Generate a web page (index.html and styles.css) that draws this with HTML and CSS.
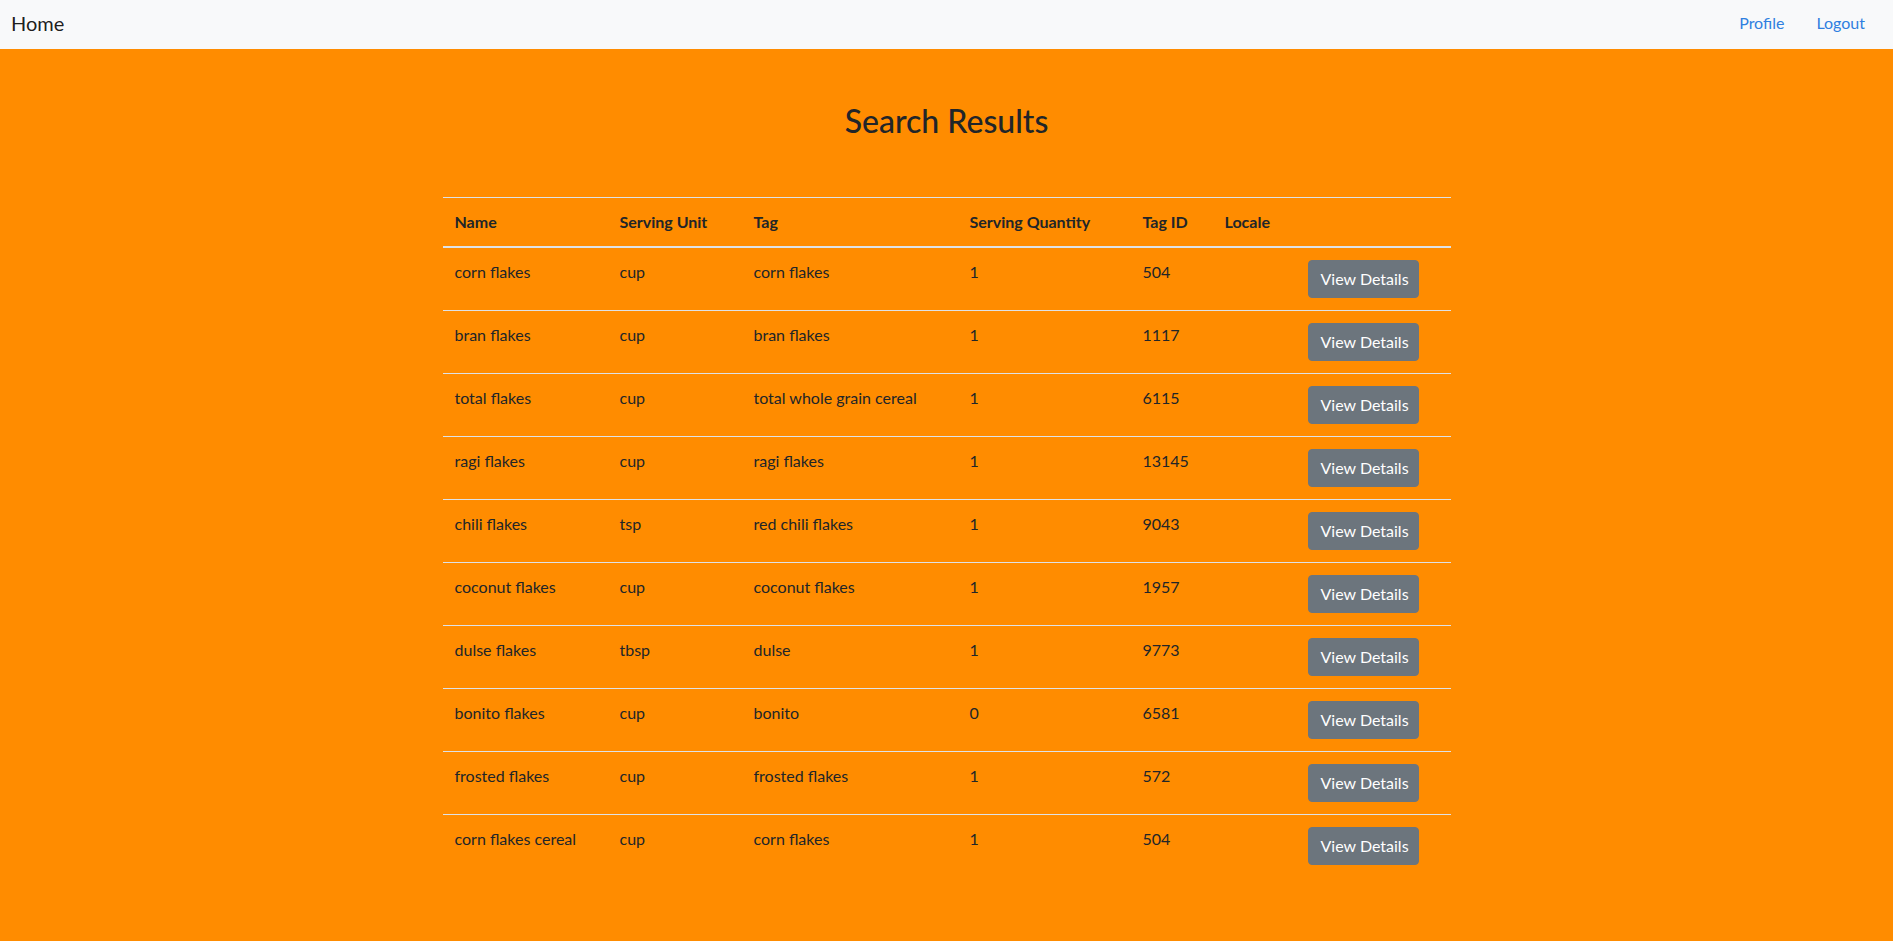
FILE: index.html
```html
<!DOCTYPE html>
<html lang="en">
<head>
<meta charset="utf-8">
<title>Search Results</title>
<link rel="stylesheet" href="styles.css">
</head>
<body>
<nav class="navbar">
  <a class="brand" href="#">Home</a>
  <div class="nav-links">
    <a class="nav-link" href="#">Profile</a>
    <a class="nav-link" href="#">Logout</a>
  </div>
</nav>
<main class="content">
  <h2 class="title">Search Results</h2>
  <table class="results">
    <colgroup>
      <col class="c-name"><col class="c-unit"><col class="c-tag"><col class="c-qty"><col class="c-tagid"><col class="c-locale"><col class="c-action">
    </colgroup>
    <thead>
      <tr><th>Name</th><th>Serving Unit</th><th>Tag</th><th>Serving Quantity</th><th>Tag ID</th><th>Locale</th><th></th></tr>
    </thead>
    <tbody>
      <tr><td>corn flakes</td><td>cup</td><td>corn flakes</td><td>1</td><td>504</td><td></td><td><button class="btn">View Details</button></td></tr>
      <tr><td>bran flakes</td><td>cup</td><td>bran flakes</td><td>1</td><td>1117</td><td></td><td><button class="btn">View Details</button></td></tr>
      <tr><td>total flakes</td><td>cup</td><td>total whole grain cereal</td><td>1</td><td>6115</td><td></td><td><button class="btn">View Details</button></td></tr>
      <tr><td>ragi flakes</td><td>cup</td><td>ragi flakes</td><td>1</td><td>13145</td><td></td><td><button class="btn">View Details</button></td></tr>
      <tr><td>chili flakes</td><td>tsp</td><td>red chili flakes</td><td>1</td><td>9043</td><td></td><td><button class="btn">View Details</button></td></tr>
      <tr><td>coconut flakes</td><td>cup</td><td>coconut flakes</td><td>1</td><td>1957</td><td></td><td><button class="btn">View Details</button></td></tr>
      <tr><td>dulse flakes</td><td>tbsp</td><td>dulse</td><td>1</td><td>9773</td><td></td><td><button class="btn">View Details</button></td></tr>
      <tr><td>bonito flakes</td><td>cup</td><td>bonito</td><td>0</td><td>6581</td><td></td><td><button class="btn">View Details</button></td></tr>
      <tr><td>frosted flakes</td><td>cup</td><td>frosted flakes</td><td>1</td><td>572</td><td></td><td><button class="btn">View Details</button></td></tr>
      <tr><td>corn flakes cereal</td><td>cup</td><td>corn flakes</td><td>1</td><td>504</td><td></td><td><button class="btn">View Details</button></td></tr>
    </tbody>
  </table>
</main>
</body>
</html>
```
FILE: styles.css
```css
* { box-sizing: border-box; }
html, body {
  margin: 0;
  padding: 0;
  background: #ff8c00;
  min-height: 100vh;
}
body {
  font-family: Lato, "Open Sans", "Noto Sans", sans-serif;
  font-size: 16px;
  line-height: 1.5;
  color: #212529;
}
.navbar {
  height: 49px;
  background: #f8f9fa;
  display: flex;
  align-items: center;
  justify-content: space-between;
  padding: 0 12px 0 11px;
}
.brand {
  font-size: 20px;
  color: rgba(0, 0, 0, 0.9);
  text-decoration: none;
  line-height: 30px;
  margin-top: -3px;
}
.nav-links {
  display: flex;
  margin-top: -3px;
}
.nav-link {
  color: #2f7fe0;
  text-decoration: none;
  padding: 0 16px;
  line-height: 24px;
}
.content {
  padding: 53px 0 40px;
}
.title {
  margin: 0 0 57px;
  text-align: center;
  font-size: 32px;
  font-weight: 500;
  line-height: 1.2;
}
.results {
  width: 1008px;
  margin: 0 auto;
  border-collapse: collapse;
  table-layout: fixed;
}
.c-name { width: 165px; }
.c-unit { width: 134px; }
.c-tag { width: 216px; }
.c-qty { width: 173px; }
.c-tagid { width: 82px; }
.c-locale { width: 83px; }
.c-action { width: 155px; }
.results th,
.results td {
  padding: 12px;
  text-align: left;
  border-top: 1px solid #dee2e6;
  vertical-align: top;
}
.results th {
  font-weight: 700;
  vertical-align: bottom;
  border-bottom: 2px solid #dee2e6;
}
.results tbody tr:first-child td {
  border-top: 0;
}
.btn {
  font-family: inherit;
  font-size: 16px;
  line-height: 24px;
  color: #fff;
  background: #6c757d;
  border: 1px solid #6c757d;
  border-radius: 4px;
  padding: 6px 12px;
  width: 111px;
  height: 38px;
  cursor: pointer;
  white-space: nowrap;
}
```
